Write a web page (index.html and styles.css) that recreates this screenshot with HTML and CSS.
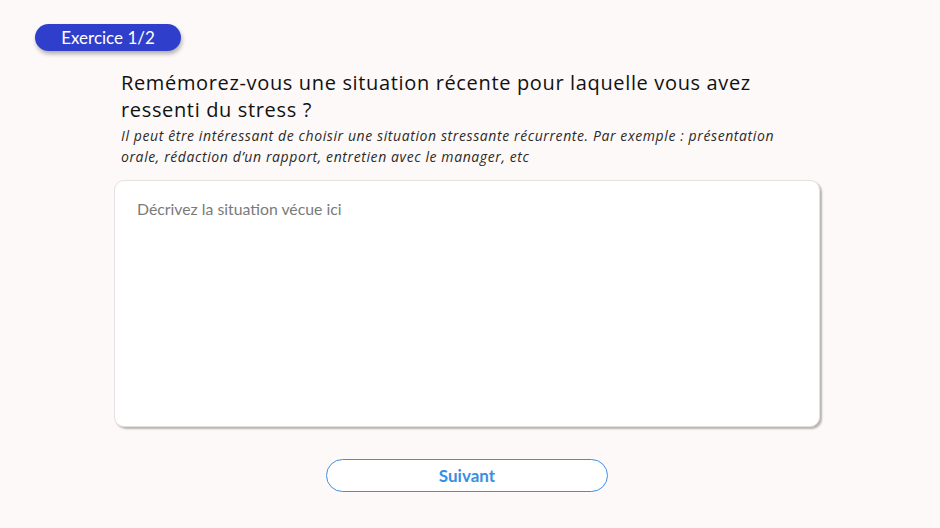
FILE: index.html
```html
<!DOCTYPE html>
<html lang="fr">
<head>
<meta charset="utf-8">
<title>Exercice 1/2</title>
<link rel="stylesheet" href="styles.css">
</head>
<body>
<div class="page">
  <div class="badge">Exercice 1/2</div>
  <main class="content">
    <h1 class="title">Remémorez-vous une situation récente pour laquelle vous avez ressenti du stress ?</h1>
    <p class="hint">Il peut être intéressant de choisir une situation stressante récurrente. Par exemple : présentation orale, rédaction d’un rapport, entretien avec le manager, etc</p>
    <textarea class="answer" placeholder="Décrivez la situation vécue ici"></textarea>
    <div class="actions">
      <button class="next">Suivant</button>
    </div>
  </main>
</div>
</body>
</html>
```
FILE: styles.css
```css
html, body {
  margin: 0;
  padding: 0;
  background: #fdf9f8;
}
.page {
  width: 940px;
  height: 528px;
  box-sizing: border-box;
  padding: 24px 0 0 35px;
  font-family: "Lato", "Open Sans", sans-serif;
}
.badge {
  width: 146px;
  height: 27px;
  box-sizing: border-box;
  background: #2f3fcc;
  color: #ffffff;
  border-radius: 14px;
  font-family: "Lato", sans-serif;
  font-size: 17px;
  line-height: 27px;
  text-align: center;
  box-shadow: 1px 3px 4px rgba(0, 0, 0, 0.3);
}
.content {
  margin-left: 79px;
  width: 706px;
}
.title {
  margin: 18px 0 0 7px;
  font-family: "Open Sans", sans-serif;
  font-weight: 500;
  font-size: 20px;
  letter-spacing: 0.65px;
  line-height: 27px;
  color: #111111;
  width: 660px;
}
.hint {
  margin: 2px 0 0 7px;
  font-family: "Open Sans", sans-serif;
  font-style: italic;
  font-size: 14px;
  letter-spacing: 0.6px;
  line-height: 21px;
  color: #2a2a2a;
  width: 675px;
}
.answer {
  display: block;
  margin-top: 13px;
  width: 706px;
  height: 247px;
  box-sizing: border-box;
  padding: 18px 22px;
  border: 1px solid #e6dfdf;
  border-radius: 10px;
  background: #ffffff;
  box-shadow: 2px 2px 2px rgba(0, 0, 0, 0.28);
  font-family: "Lato", sans-serif;
  font-size: 15.8px;
  color: #333;
  resize: none;
  outline: none;
}
.answer::placeholder {
  color: #7a7a7a;
}
.actions {
  display: flex;
  justify-content: center;
  margin-top: 32px;
}
.next {
  width: 282px;
  height: 33px;
  border: 1px solid #3f8fe0;
  border-radius: 17px;
  background: #ffffff;
  color: #3a8ee2;
  font-family: "Lato", sans-serif;
  font-weight: 700;
  font-size: 17px;
  cursor: pointer;
}
```
